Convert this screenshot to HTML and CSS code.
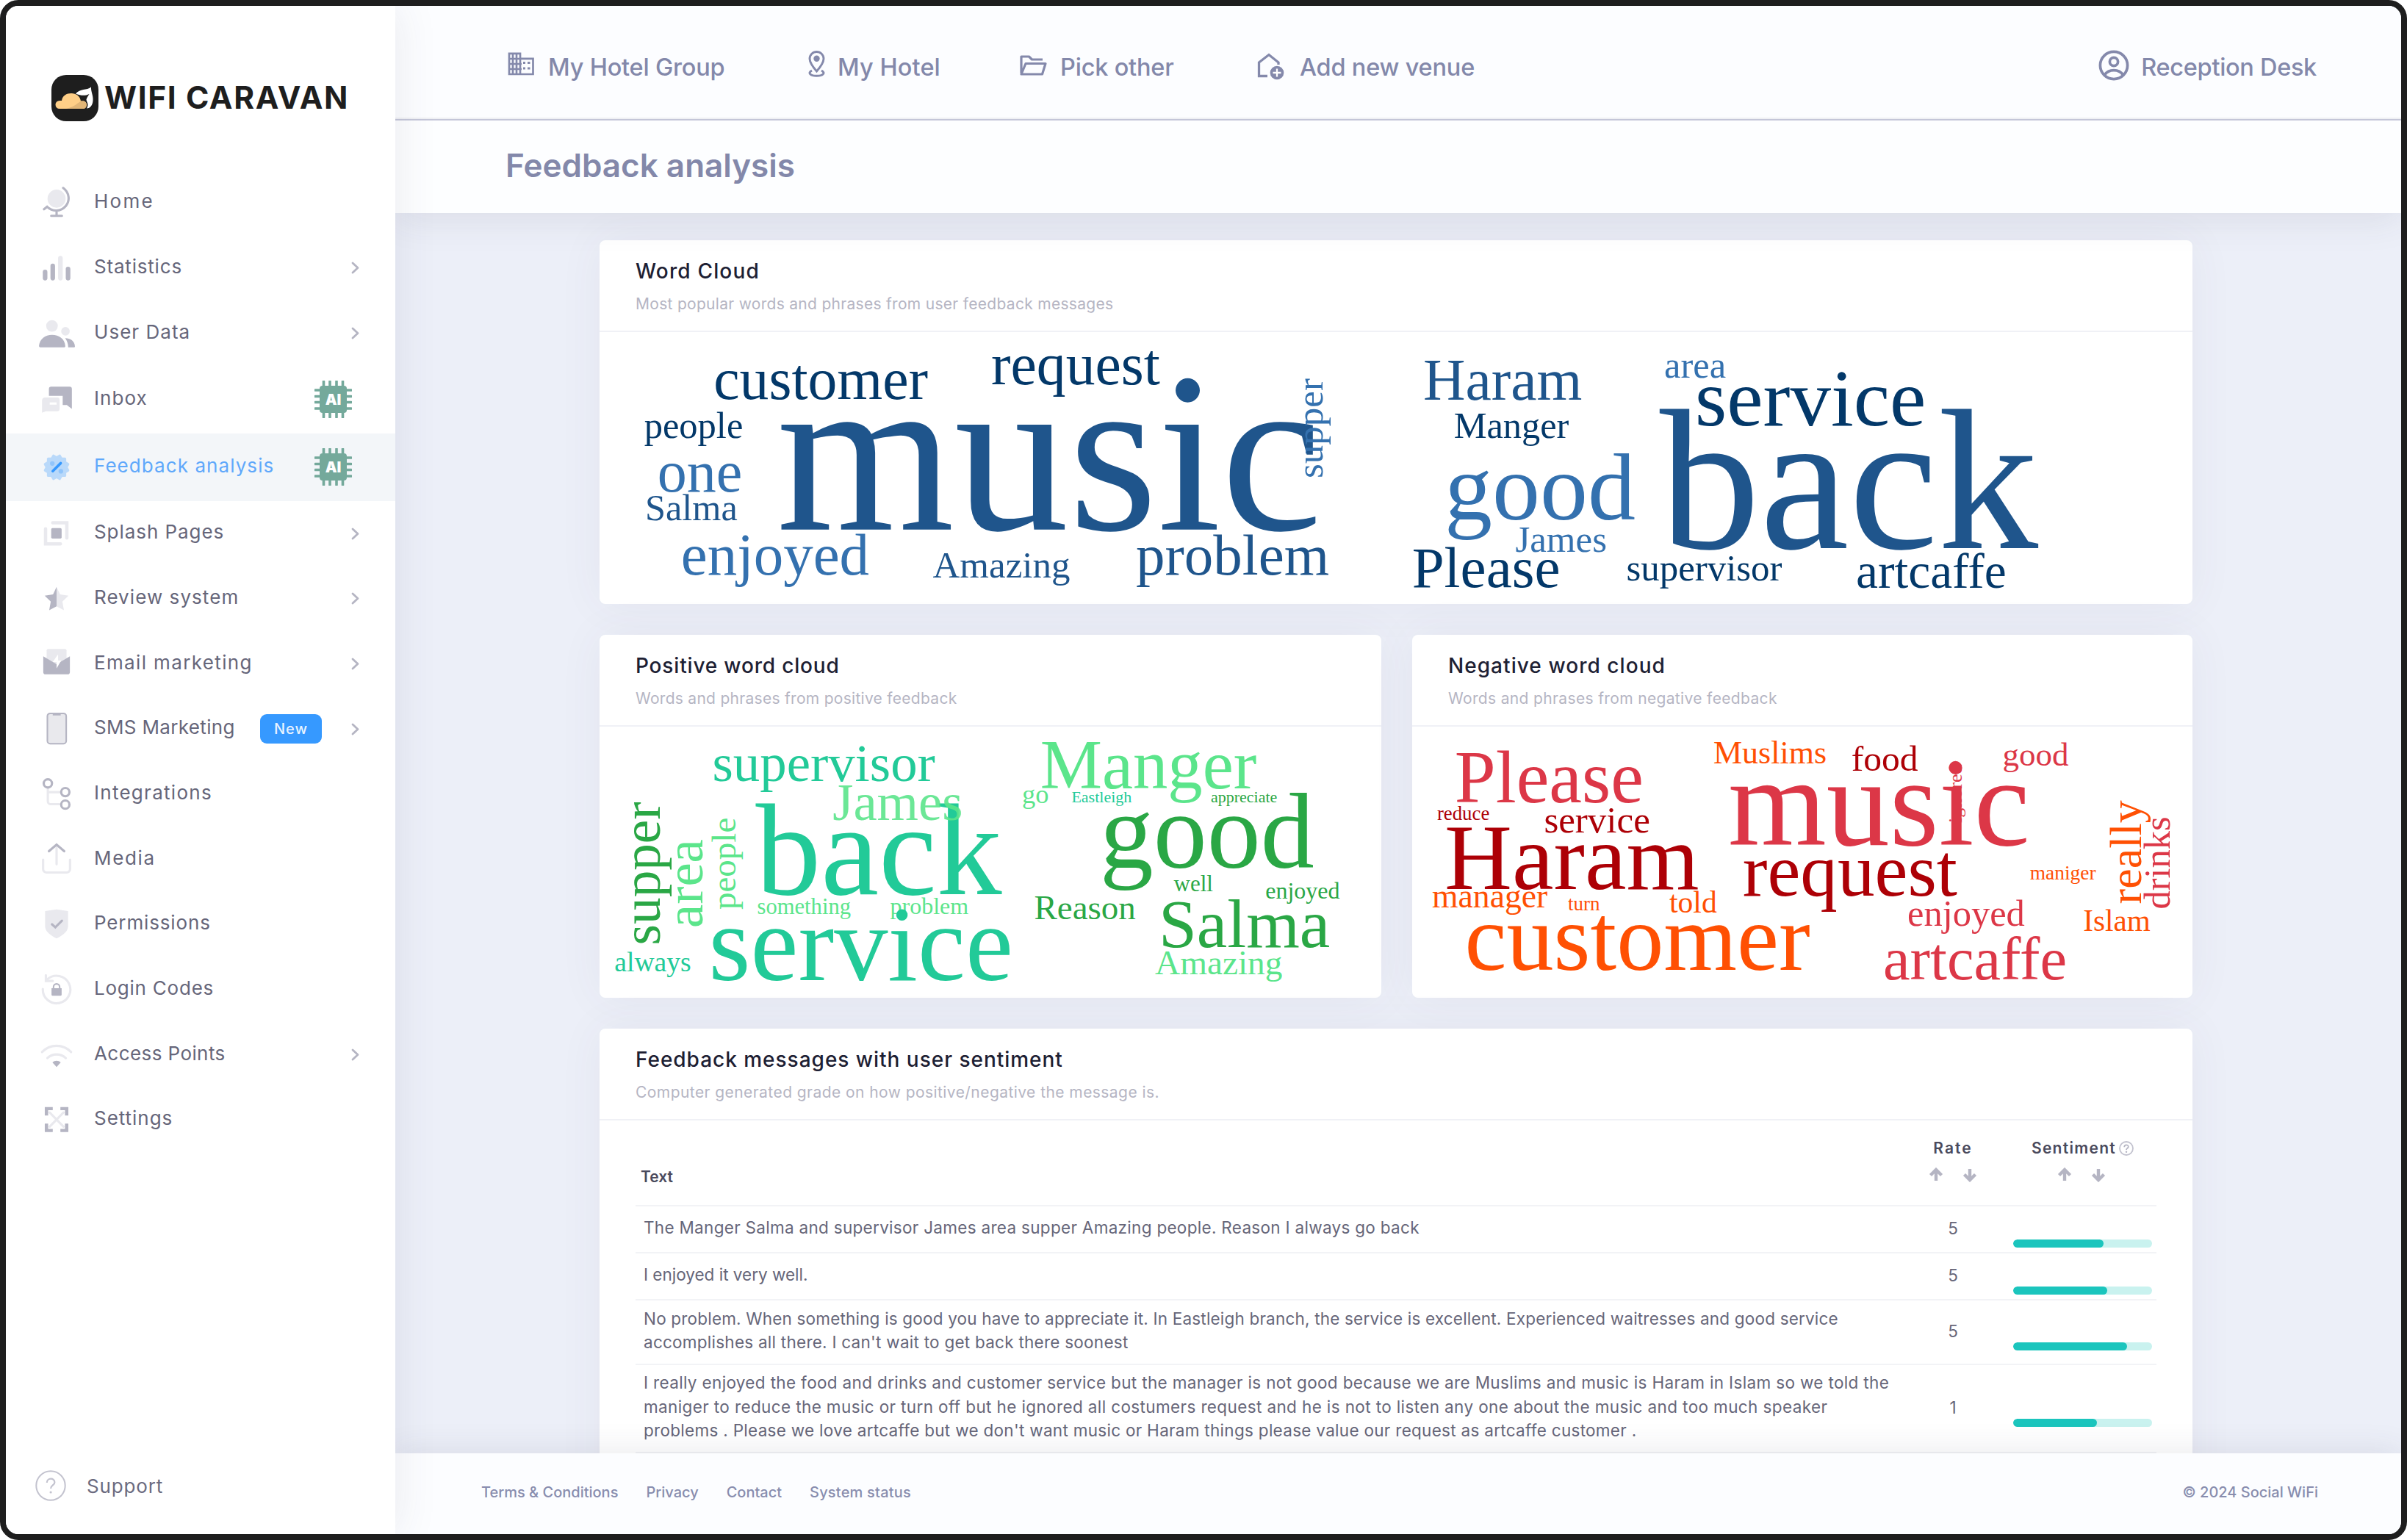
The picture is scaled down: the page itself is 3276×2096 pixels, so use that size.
FILE: index.html
```html
<!DOCTYPE html>
<html lang="en">
<head>
<meta charset="utf-8">
<title>Feedback analysis</title>
<link rel="stylesheet" href="styles.css">
</head>
<body>
<svg class="defs" width="0" height="0" aria-hidden="true">
  <symbol id="chevron" viewBox="0 0 24 24"><path d="M8 4.500l8 7.500-8 7.500" fill="none" stroke="#b5b5c3" stroke-width="3.200" stroke-linecap="round" stroke-linejoin="round"/></symbol>
  <symbol id="chip" viewBox="0 0 51 51">
    <path d="M12.500 1v49M21 1v49M30 1v49M38.500 1v49M1 13h49M1 21.500h49M1 29.500h49M1 38h49" stroke="#74a99b" stroke-width="3.600" stroke-linecap="round"/>
    <rect x="7" y="7" width="37" height="37" rx="4" fill="#74a99b"/>
    <text x="25.500" y="32.500" text-anchor="middle" font-family="Inter, sans-serif" font-weight="900" font-size="20" fill="#fff">AI</text>
  </symbol>
  <symbol id="up" viewBox="0 0 20 20"><path d="M10 18V3M2.500 10.500L10 3l7.500 7.500" fill="none" stroke="#b5b5c3" stroke-width="4.400"/></symbol>
  <symbol id="down" viewBox="0 0 20 20"><path d="M10 2v15M2.500 9.500L10 17l7.500-7.500" fill="none" stroke="#b5b5c3" stroke-width="4.400"/></symbol>
</svg>
<div class="frame">
  <aside class="sidebar">
    <div class="logo">
      <svg class="logo-mark" viewBox="0 0 64 63">
        <rect width="64" height="63" rx="20" fill="#1e1e1e"/>
        <path d="M33 25.500C39 18 48 21.500 54 16.500c-.5 6 3 11 2.500 18.500C56 41 53 45.500 48 45.500c3.500-6 0-8-.500-12 1-3.500 2.500-5 4-7.500-6 3-12 2-18.500-.500z" fill="#fff"/>
        <path d="M11 46a5.500 5.500 0 0 1 0-11h3C15 28 20.500 25 27 25s12 4 13 10.500h4a5.500 5.500 0 0 1 0 10.500z" fill="#ffcf87"/>
        <path d="M20 46c8-1.500 14-6 20-10.500h4A5.500 5.500 0 0 1 44 46z" fill="#e2b677"/>
      </svg>
      <span class="logo-text">WIFI CARAVAN</span>
    </div>
    <nav class="menu">
      <a class="item"><svg class="ico" viewBox="0 0 24 24"><circle class="lt" cx="12" cy="9.300" r="5.900"/><path class="st" d="M16.300 2.300C20.300 5.300 21 10.500 18 14.100C14.700 18 9.300 18 5.800 14.600L3.800 16.200M12 17.500V20M8.500 20.500h7"/></svg><span class="label l-home">Home</span></a>
      <a class="item"><svg class="ico" viewBox="0 0 24 24"><rect class="lt" x="13" y="4" width="3" height="16" rx="1.500"/><rect class="dk" x="8" y="9" width="3" height="11" rx="1.500"/><rect class="dk" x="18" y="11" width="3" height="9" rx="1.500"/><rect class="dk" x="3" y="13" width="3" height="7" rx="1.500"/></svg><span class="label l-stat">Statistics</span><svg class="chev"><use href="#chevron"/></svg></a>
      <a class="item"><svg class="ico" viewBox="0 0 24 24"><circle class="lt" cx="9" cy="7" r="3.800"/><circle class="lt" cx="17.800" cy="10.500" r="2.800"/><path class="dk" d="M17.600 15c3.400 0 6.200 1.800 6.400 5.400 0 .2 0 .6-.5.6h-3.900c0-2.250-.75-4.300-2-6zM.500 20.200C.9 15.400 4.600 12.800 9 12.800c4.600 0 8.400 2.500 8.700 7.400 0 .2 0 .8-.75.800H1.200c-.25 0-.7-.5-.7-.8z"/></svg><span class="label l-user">User Data</span><svg class="chev"><use href="#chevron"/></svg></a>
      <a class="item tall"><svg class="ico" viewBox="0 0 24 24"><path class="dk" d="M8.500 3.500h12A1.500 1.500 0 0 1 22 5v13l-3.300-2.500H16V9.500H7V5a1.500 1.500 0 0 1 1.500-1.500z"/><path class="lt" d="M4.500 10.500h8A1.500 1.500 0 0 1 14 12v6a1.500 1.500 0 0 1-1.500 1.500H5L2.500 20.500V12.500a2 2 0 0 1 2-2z"/><path d="M7.500 14.500h4.500" stroke="#fff" stroke-width="1.500"/></svg><span class="label l-inbox">Inbox</span><svg class="ai"><use href="#chip"/></svg></a>
      <a class="item tall active"><svg class="ico" viewBox="0 0 24 24"><g opacity=".3" fill="#3699ff"><rect x="5.700" y="5.700" width="12.600" height="12.600" rx=".8"/><rect x="5.700" y="5.700" width="12.600" height="12.600" rx=".8" transform="rotate(30 12 12)"/><rect x="5.700" y="5.700" width="12.600" height="12.600" rx=".8" transform="rotate(60 12 12)"/></g><path d="M9.500 14.500l5.200-5.200" stroke="#3699ff" stroke-width="1.700" stroke-linecap="round"/><g fill="#3699ff" opacity=".3"><circle cx="9.200" cy="9.500" r="1.500"/><circle cx="14.800" cy="14.600" r="1.500"/></g></svg><span class="label l-feed">Feedback analysis</span><svg class="ai"><use href="#chip"/></svg></a>
      <a class="item"><svg class="ico" viewBox="0 0 24 24"><rect class="dk" x="8.500" y="8.500" width="6.800" height="6.800" rx=".8"/><path class="sl" d="M9.500 5H18.700V15M4.800 9v9.800h9.700"/></svg><span class="label l-splash">Splash Pages</span><svg class="chev"><use href="#chevron"/></svg></a>
      <a class="item"><svg class="ico" viewBox="0 0 24 24"><path class="lt" d="M12 4.200l2.300 4.900 5.500.8-4 3.900 1 5.600-4.800-2.500z"/><path class="dk" d="M12 4.200L9.700 9.100l-5.500.8 4 3.900-1 5.600 4.800-2.500z"/></svg><span class="label l-review">Review system</span><svg class="chev"><use href="#chevron"/></svg></a>
      <a class="item"><svg class="ico" viewBox="0 0 24 24"><rect class="lt" x="5.500" y="2" width="13" height="10" rx="1"/><path class="dk" d="M3.300 6.800L12 12l8.700-5.200v10.300a1.500 1.500 0 0 1-1.500 1.500H4.800a1.500 1.500 0 0 1-1.500-1.500z"/><path d="M13 5.500L9.500 10.600H12v4.200l3-5.200h-2z" fill="#fff"/></svg><span class="label l-email">Email marketing</span><svg class="chev"><use href="#chevron"/></svg></a>
      <a class="item"><svg class="ico" viewBox="0 0 24 24"><rect x="6" y="1.900" width="12.300" height="19.800" rx="1.800" fill="#e9e9ed" stroke="#b5b5c3" stroke-width="1"/><path d="M9.500 2.500h5.200" stroke="#b5b5c3" stroke-width="1.500"/></svg><span class="label l-sms">SMS Marketing</span><span class="new">New</span><svg class="chev"><use href="#chevron"/></svg></a>
      <a class="item"><svg class="ico" viewBox="0 0 24 24"><path class="sl thin" d="M6.300 8v8.500a2 2 0 0 0 2 2h6M7 10.600h7.500"/><circle class="st" cx="6.300" cy="4.900" r="2.700"/><circle class="st" cx="17.700" cy="10.600" r="2.700"/><circle class="st" cx="17.700" cy="18.800" r="2.700"/></svg><span class="label l-int">Integrations</span></a>
      <a class="item"><svg class="ico" viewBox="0 0 24 24"><path class="sl thin" d="M12 4v11M3.200 12v6.200a2.200 2.200 0 0 0 2.200 2.200h13.200a2.200 2.200 0 0 0 2.200-2.200V12"/><path class="st" d="M7 6.500L12 2.200l5 4.300"/></svg><span class="label l-media">Media</span></a>
      <a class="item"><svg class="ico" viewBox="0 0 24 24"><path class="lt" d="M4.500 3.400L12 2.300l7.500 1.100v9.800c0 3.800-4 6.300-7.500 8-3.500-1.700-7.500-4.200-7.500-8z"/><path class="st" d="M9 12l2.200 2 4.300-4.300"/></svg><span class="label l-perm">Permissions</span></a>
      <a class="item"><svg class="ico" viewBox="0 0 24 24"><path class="sl thin" d="M6.200 5A9 9 0 1 1 3 11.500M5 2.500V6.300H9.500"/><path class="dk" d="M8.700 11h6.600v4.200a.8.800 0 0 1-.8.800h-5a.8.800 0 0 1-.8-.8z"/><path class="lock" d="M10 11.300V10.200a2 2 0 0 1 4 0v1.100"/></svg><span class="label l-login">Login Codes</span></a>
      <a class="item"><svg class="ico" viewBox="0 0 24 24"><path class="sl thin" d="M2.500 10C7.800 4.600 16.200 4.600 21.500 10M6 14c3.300-3.200 8.700-3.200 12 0"/><path class="dk" d="M9.300 16.800c1.500-1.400 3.900-1.400 5.400 0L12 19.800z"/></svg><span class="label l-ap">Access Points</span><svg class="chev"><use href="#chevron"/></svg></a>
      <a class="item"><svg class="ico" viewBox="0 0 24 24"><path class="sl thin" d="M7.500 7.300l9 9.200M16.500 7.300l-9 9.200"/><path class="dk" d="M4.300 3.700h5.200v2H6.500v3.500H4.300zM19.700 3.700h-5.200v2h3v3.500h2.200zM4.300 20h5.200v-2H6.500v-3.500H4.300zM19.700 20h-5.200v-2h3v-3.500h2.200z"/></svg><span class="label l-set">Settings</span></a>
    </nav>
    <div class="support"><svg class="support-ico" viewBox="0 0 42 42"><circle cx="21" cy="21" r="19.700" fill="none" stroke="#c3c3cf" stroke-width="2"/><path d="M15.800 17c0-7 10.600-7 10.600-.5 0 4-5.300 4-5.300 8.500" fill="none" stroke="#c3c3cf" stroke-width="2.200"/><circle cx="21.100" cy="30" r="1.600" fill="#c3c3cf"/></svg><span>Support</span></div>
  </aside>
  <div class="main">
    <header class="topbar">
      <div class="venues">
        <div class="venue v1"><svg width="37" height="32" viewBox="0 0 37 32"><path d="M2 1.800h15v7h17.500V30H2zM17 8.800V30M7 2v28M12 2v28M2 9h15M2 16h17M2 23h17" fill="none" stroke="#8489ab" stroke-width="2.700"/><path d="M21 14.500h3M21 22h3M27 14.500h3.500M27 22h3.500" stroke="#8489ab" stroke-width="3"/></svg><span>My Hotel Group</span></div>
        <div class="venue v2"><svg width="23" height="36" viewBox="0 0 23 36"><path d="M11.500 28C5 20.500 2 15.500 2 11a9.500 9.500 0 0 1 19 0c0 4.500-3 9.500-9.500 17z" fill="none" stroke="#8489ab" stroke-width="2.900"/><circle cx="11.500" cy="10.700" r="4.200" fill="#8489ab"/><path d="M5 27c-6.500 3.500-1.500 7.300 6.500 7.300S24.500 30.500 18 27" fill="none" stroke="#8489ab" stroke-width="2.900"/></svg><span>My Hotel</span></div>
        <div class="venue v3"><svg width="37" height="28" viewBox="0 0 37 28"><path d="M2 24.500V2h10.500l4 4H31M2 26L8 11.500h27L30.500 26z" fill="none" stroke="#8489ab" stroke-width="3.200" stroke-linejoin="round"/></svg><span>Pick other</span></div>
        <div class="venue v4"><svg width="37" height="37" viewBox="0 0 37 37"><path d="M14 31.500H2.500V13L16 2.500 29 13v3" fill="none" stroke="#8489ab" stroke-width="3.300"/><circle cx="27" cy="27" r="9.300" fill="#8489ab"/><path d="M27 21.500v11M21.500 27h11" stroke="#fff" stroke-width="2.300"/></svg><span>Add new venue</span></div>
      </div>
      <div class="user"><svg width="42" height="42" viewBox="0 0 42 42"><g fill="none" stroke="#8489ab" stroke-width="3.700"><circle cx="21" cy="21" r="18.600"/><circle cx="21" cy="16" r="5.600"/><path d="M8.500 34C14 25.500 28 25.500 33.500 34"/></g></svg><span>Reception Desk</span></div>
    </header>
    <div class="pagehead"><h1>Feedback analysis</h1></div>
    <main class="content">
      <section class="card">
        <div class="card-head"><h2 class="t1">Word Cloud</h2><p class="s1">Most popular words and phrases from user feedback messages</p></div>
        <svg class="cloud" width="2168" height="370" viewBox="816 452 2168 370">
          <g class="navy">
            <text x="971.300" y="543" font-size="79.600">customer</text>
            <text x="1349" y="523.300" font-size="79.600">request</text>
            <text x="876.700" y="595.700" font-size="50.500">people</text>
            <text x="2307" y="579.300" font-size="111">service</text>
            <text x="1978.700" y="595.700" font-size="50.400">Manger</text>
            <text x="1921.700" y="799" font-size="79">Please</text>
            <text x="2213.500" y="790" font-size="50.900">supervisor</text>
            <text x="2526" y="799.700" font-size="67.500">artcaffe</text>
          </g>
          <g class="blue">
            <text x="1057" y="720.700" font-size="311">music</text>
            <text x="878" y="707.700" font-size="50.300">Salma</text>
            <text x="1269.500" y="785.700" font-size="51">Amazing</text>
            <text x="1546" y="782.300" font-size="79">problem</text>
            <text x="1937" y="544.300" font-size="79.500">Haram</text>
            <text x="2258.800" y="746" font-size="273">back</text>
          </g>
          <g class="sky">
            <text x="894.700" y="668.700" font-size="80">one</text>
            <text x="926.700" y="781.700" font-size="81">enjoyed</text>
            <text transform="translate(1799.600 651) rotate(-90)" font-size="51">supper</text>
            <text x="2265" y="513.700" font-size="50.500">area</text>
            <text x="1966" y="706.700" font-size="130">good</text>
            <text x="2062.400" y="751.300" font-size="51">James</text>
          </g>
        </svg>
      </section>
      <div class="pair">
        <section class="card">
          <div class="card-head"><h2 class="t2">Positive word cloud</h2><p class="s2">Words and phrases from positive feedback</p></div>
          <svg class="cloud" width="1064" height="369" viewBox="816 989 1064 369">
            <g class="lime">
              <text transform="translate(955.700 1263) rotate(-90)" font-size="72.600">area</text>
              <text transform="translate(1000.600 1238) rotate(-90)" font-size="47">people</text>
              <text x="1030.500" y="1243.800" font-size="30.600">something</text>
              <text x="1211.500" y="1243.800" font-size="32">problem</text>
              <text x="1415.800" y="1073.400" font-size="94.700">Manger</text>
              <text x="1391" y="1093.400" font-size="36.500">go</text>
              <text x="1572" y="1325.600" font-size="47.300">Amazing</text>
            </g>
            <g class="teal">
              <text x="969.500" y="1063" font-size="72.800">supervisor</text>
              <text x="1028.500" y="1217" font-size="177.500">back</text>
              <text x="964.500" y="1334.400" font-size="146.400">service</text>
              <text x="836.300" y="1321.500" font-size="37.600">always</text>
              <text x="1458.400" y="1092" font-size="22">Eastleigh</text>
            </g>
            <g class="lime"><text x="1133.200" y="1115.700" font-size="72.500" opacity=".9">James</text></g>
            <g class="green">
              <text transform="translate(898.200 1286.400) rotate(-90)" font-size="73.200">supper</text>
              <text x="1648" y="1092" font-size="22">appreciate</text>
              <text x="1496.800" y="1180.600" font-size="146">good</text>
              <text x="1597.500" y="1213.400" font-size="31">well</text>
              <text x="1722.200" y="1223.200" font-size="32">enjoyed</text>
              <text x="1407.500" y="1251.200" font-size="47">Reason</text>
              <text x="1576.900" y="1288.700" font-size="93.400">Salma</text>
            </g>
          </svg>
        </section>
        <section class="card">
          <div class="card-head"><h2 class="t3">Negative word cloud</h2><p class="s3">Words and phrases from negative feedback</p></div>
          <svg class="cloud" width="1062" height="369" viewBox="1922 989 1062 369">
            <g class="rose">
              <text x="1979.800" y="1092" font-size="100.600">Please</text>
              <text x="2725.500" y="1041.700" font-size="45">good</text>
              <text transform="translate(2670 1120) rotate(-90)" font-size="26">ignored</text>
              <text x="2352" y="1149.500" font-size="172">music</text>
              <text x="2596" y="1260" font-size="50.500">enjoyed</text>
              <text x="2563" y="1332.700" font-size="82.400">artcaffe</text>
              <text transform="translate(2952.700 1237.500) rotate(-90)" font-size="50.500">drinks</text>
            </g>
            <g class="wine">
              <text x="2519.800" y="1049.400" font-size="49.500">food</text>
              <text x="1955.900" y="1115.700" font-size="26.800">reduce</text>
              <text x="2101.400" y="1133.300" font-size="51">service</text>
              <text x="1966" y="1210.300" font-size="127.400">Haram</text>
              <text x="2371.700" y="1219" font-size="101.200">request</text>
            </g>
            <g class="orange">
              <text x="2332" y="1039.300" font-size="44">Muslims</text>
              <text x="1949" y="1235.300" font-size="45.700">manager</text>
              <text x="2134" y="1239.400" font-size="27">turn</text>
              <text x="2272" y="1241.800" font-size="41.600">told</text>
              <text x="1993.500" y="1319.500" font-size="128.300">customer</text>
              <text x="2762.800" y="1196.500" font-size="27.400">maniger</text>
              <text x="2835.200" y="1267" font-size="41.200">Islam</text>
              <text transform="translate(2913.700 1230.500) rotate(-90)" font-size="62">really</text>
            </g>
          </svg>
        </section>
      </div>
      <section class="card messages">
        <div class="card-head"><h2 class="t4">Feedback messages with user sentiment</h2><p class="s4">Computer generated grade on how positive/negative the message is.</p></div>
        <div class="table">
          <div class="row thead">
            <div class="th-text">Text</div>
            <div class="th"><div class="th-name w-rate">Rate</div><div class="sort"><svg width="20" height="20"><use href="#up"/></svg><svg width="20" height="20"><use href="#down"/></svg></div></div>
            <div class="th"><div class="th-name w-sent">Sentiment<svg width="20" height="20" viewBox="0 0 20 20"><circle cx="10" cy="10" r="9" fill="none" stroke="#c3c3cf" stroke-width="1.800"/><path d="M7.200 8.200c0-3.800 5.600-3.800 5.600-.4 0 2-2.800 2-2.800 4.200" fill="none" stroke="#b5b5c3" stroke-width="1.800"/><circle cx="10" cy="14.800" r="1.200" fill="#b5b5c3"/></svg></div><div class="sort"><svg width="20" height="20"><use href="#up"/></svg><svg width="20" height="20"><use href="#down"/></svg></div></div>
          </div>
          <div class="row r1"><div class="msg"><span class="m1">The Manger Salma and supervisor James area supper Amazing people. Reason I always go back</span></div><div class="rate">5</div><div class="sent"><div class="bar"><div class="fill" style="width:65%"></div></div></div></div>
          <div class="row r1"><div class="msg"><span class="m2">I enjoyed it very well.</span></div><div class="rate">5</div><div class="sent"><div class="bar"><div class="fill" style="width:67.500%"></div></div></div></div>
          <div class="row r3"><div class="msg"><span class="m3">No problem. When something is good you have to appreciate it. In Eastleigh branch, the service is excellent. Experienced waitresses and good service</span><span class="m4">accomplishes all there. I can't wait to get back there soonest</span></div><div class="rate">5</div><div class="sent"><div class="bar"><div class="fill" style="width:82%"></div></div></div></div>
          <div class="row r4"><div class="msg"><span class="m5">I really enjoyed the food and drinks and customer service but the manager is not good because we are Muslims and music is Haram in Islam so we told the</span><span class="m6">maniger to reduce the music or turn off but he ignored all costumers request and he is not to listen any one about the music and too much speaker</span><span class="m7">problems . Please we love artcaffe but we don't want music or Haram things please value our request as artcaffe customer .</span></div><div class="rate">1</div><div class="sent"><div class="bar"><div class="fill" style="width:60.500%"></div></div></div></div>
        </div>
      </section>
    </main>
    <footer class="footer">
      <div class="links"><a>Terms &amp; Conditions</a><a>Privacy</a><a>Contact</a><a class="w-status">System status</a></div>
      <div>© 2024 Social WiFi</div>
    </footer>
  </div>
</div>
</body>
</html>
```
FILE: styles.css
```css
* { box-sizing: border-box; }
body { margin: 0; background: #fff; font-family: Inter, "Liberation Sans", sans-serif; }
h1, h2, p { margin: 0; font-weight: 500; }
.defs { position: absolute; }
svg { display: block; flex: none; }

.frame { width: 3276px; height: 2096px; border: 8px solid #1e1e1e; border-radius: 25px; overflow: hidden; display: flex; background: #eceff8; }

/* Sidebar */
.sidebar { width: 530px; flex: none; background: #fff; display: flex; flex-direction: column; padding-bottom: 45px; position: relative; z-index: 3; box-shadow: 0 0 56px rgba(60, 62, 90, .1); }
.logo { display: flex; align-items: center; gap: 8px; height: 224px; padding: 27px 0 0 62px; }
.logo-mark { width: 64px; height: 63px; }
.logo-text { font-size: 42.500px; line-height: 60px; font-weight: 700; letter-spacing: 1.600px; color: #1e1e1e; padding-bottom: 1px; }
.menu { display: flex; flex-direction: column; }
.item { display: flex; align-items: center; height: 88.670px; padding: 0 44px 0 44px; }
.item.tall { height: 92px; }
.ico { width: 50px; height: 50px; }
.dk { fill: #b5b5c3; }
.lt { fill: #e9e9ee; }
.st { fill: none; stroke: #b5b5c3; stroke-width: 1.500; stroke-linecap: round; }
.lock { fill: none; stroke: #b5b5c3; stroke-width: 1; }
.sl { fill: none; stroke: #e9e9ee; stroke-width: 2.200; stroke-linecap: round; }
.sl.thin { stroke-width: 1.500; }
.label { margin-left: 26px; padding-bottom: 4px; font-size: 26px; line-height: 40px; color: #66667a; white-space: nowrap; flex: 1; }
.active { background: #f3f6f9; }
.active .label { color: #5fa8fb; }
.chev { width: 21px; height: 21px; }
.ai { width: 51px; height: 51px; margin-right: 15px; }
.new { width: 84px; height: 40px; margin-right: 35px; border-radius: 9px; background: #3699ff; color: #e8f3ff; font-size: 20px; font-weight: 500; line-height: 40px; text-align: center; letter-spacing: 1px; }
.l-home { letter-spacing: 2.270px; }
.l-stat { letter-spacing: .810px; }
.l-user { letter-spacing: 1.030px; }
.l-inbox { letter-spacing: 1.080px; }
.l-feed { letter-spacing: 1.070px; }
.l-splash { letter-spacing: .940px; }
.l-review { letter-spacing: 1.060px; }
.l-email { letter-spacing: 1.360px; }
.l-sms { letter-spacing: .340px; }
.l-int { letter-spacing: 1.280px; }
.l-media { letter-spacing: 1.670px; }
.l-perm { letter-spacing: .860px; }
.l-login { letter-spacing: .770px; }
.l-ap { letter-spacing: .420px; }
.l-set { letter-spacing: .970px; }
.support { margin-top: auto; display: flex; align-items: center; gap: 28px; padding-left: 40px; font-size: 26px; letter-spacing: .850px; color: #6b6b80; }
.support-ico { width: 42px; height: 42px; }

/* Main column */
.main { flex: 1; display: flex; flex-direction: column; min-width: 0; }
.topbar { height: 156px; flex: none; background: #fcfdff; border-bottom: 2px solid #c4c6d8; box-shadow: inset 0 -2px #eff0f4; display: flex; align-items: center; justify-content: space-between; padding: 12px 115px 0 153px; font-size: 32.500px; font-weight: 500; letter-spacing: -.200px; color: #8388aa; position: relative; z-index: 2; }
.venues { display: grid; grid-template-columns: 409px 288px 323px auto; }
.venue, .user { display: flex; align-items: center; white-space: nowrap; }
.v1 { gap: 18px; }
.v1 svg, .v2 svg { margin-bottom: 8px; }
.v2 { gap: 17px; }
.v2 span { letter-spacing: .1px; }
.v3 { gap: 18px; }
.v3 svg { margin-bottom: 4px; }
.v4 { gap: 21px; }
.v4 svg { margin-bottom: 2px; }
.user { gap: 16px; letter-spacing: -.300px; }
.user svg { margin-bottom: 4px; }
.pagehead { height: 126px; flex: none; background: #fdfeff; display: flex; align-items: center; padding: 0 0 4px 150px; position: relative; z-index: 1; box-shadow: 0 8px 50px rgba(60, 60, 80, .1); }
.pagehead h1 { font-size: 44px; font-weight: 600; color: #8388aa; }
.content { flex: 1; min-height: 0; overflow: hidden; padding: 37px 0 0 278px; display: flex; flex-direction: column; gap: 42px; }
.card { width: 2168px; flex: none; background: #fff; border-radius: 8px; box-shadow: 0 0 62px rgba(82, 63, 105, .06); }
.pair { display: flex; gap: 42px; flex: none; width: 2168px; }
.pair .card { width: 1064px; }
.pair .card + .card { width: 1062px; }
.card-head { height: 125px; border-bottom: 2px solid #f0f1f6; padding: 22px 50px 0 49px; white-space: nowrap; }
.card-head h2 { font-size: 28px; line-height: 40px; color: #1d2033; }
.card-head p { margin-top: 10px; font-size: 21px; line-height: 30px; font-weight: 400; color: #b5b5c3; }
.t1 { letter-spacing: 1.160px; }
.t2 { letter-spacing: .830px; }
.t3 { letter-spacing: 1.050px; }
.t4 { letter-spacing: .980px; }
.s1 { letter-spacing: .295px; }
.s2 { letter-spacing: .285px; }
.s3 { letter-spacing: .350px; }
.s4 { letter-spacing: .437px; }

/* Word clouds */
.cloud text { font-family: "Liberation Serif", "Times New Roman", serif; }
.navy { fill: #033869; }
.blue { fill: #1f558c; }
.sky { fill: #3471af; }
.lime { fill: #5be58b; }
.teal { fill: #22ca98; }
.green { fill: #2aa745; }
.rose { fill: #dc3747; }
.wine { fill: #ad0006; }
.orange { fill: #ff5003; }

/* Messages table */
.messages { height: 900px; }
.table { margin: 0 49px; }
.row { display: grid; grid-template-columns: 1fr 146px 204px; align-items: center; border-bottom: 2px solid #f2f3f6; font-size: 22.500px; color: #666679; }
.thead { height: 117px; color: #4a4a5c; font-size: 21px; font-weight: 600; }
.th-text { padding: 37px 0 0 7px; }
.th { display: flex; flex-direction: column; align-items: center; gap: 13px; padding-bottom: 7px; }
.th-name { display: flex; align-items: center; gap: 4px; line-height: 26px; }
.w-rate { letter-spacing: 2px; }
.w-sent { letter-spacing: 1.300px; padding-left: 3px; }
.sort { display: flex; gap: 26px; }
.r1 { height: 64px; padding-bottom: 4px; }
.r3 { height: 88px; padding-bottom: 4px; }
.r4 { height: 120px; padding-bottom: 4px; }
.msg { padding-left: 11px; line-height: 32.500px; white-space: nowrap; }
.msg span { display: block; }
.m1 { letter-spacing: .300px; }
.m2 { letter-spacing: 0; }
.m3 { letter-spacing: .192px; }
.m4 { letter-spacing: .251px; }
.m5 { letter-spacing: .345px; }
.m6 { letter-spacing: .381px; }
.m7 { letter-spacing: .291px; }
.rate { text-align: center; }
.sent { padding: 42px 6px 0 9px; }
.bar { height: 11px; border-radius: 6px; background: #c9f2ef; overflow: hidden; }
.fill { height: 100%; border-radius: 6px; background: #1bc5bd; }

/* Footer */
.footer { height: 110px; flex: none; background: #fcfdff; display: flex; align-items: center; justify-content: space-between; padding: 0 113px 4px 117px; font-size: 20px; font-weight: 500; color: #888dae; position: relative; z-index: 1; box-shadow: 0 0 45px rgba(60, 60, 80, .12); }
.links { display: flex; gap: 38px; }
.w-status { letter-spacing: .200px; }
```
